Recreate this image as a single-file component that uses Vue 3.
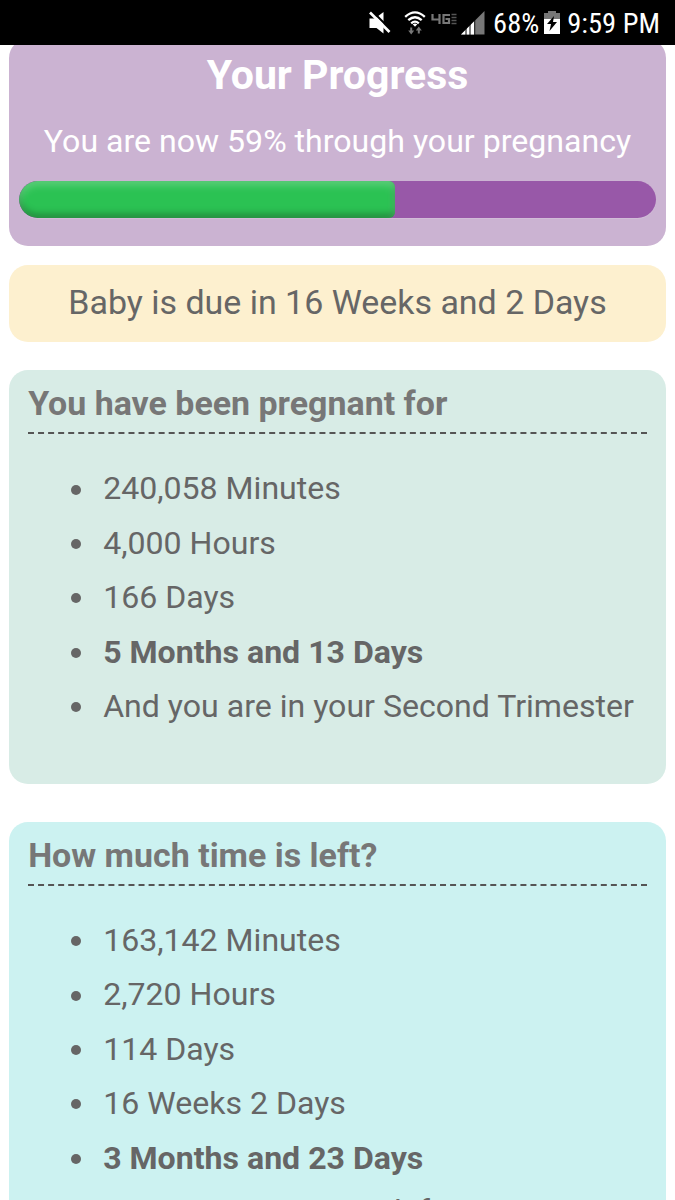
<script setup>
const elapsed = [
  { text: '240,058 Minutes' },
  { text: '4,000 Hours' },
  { text: '166 Days' },
  { text: '5 Months and 13 Days', strong: true },
  { text: 'And you are in your Second Trimester' },
]
const remaining = [
  { text: '163,142 Minutes' },
  { text: '2,720 Hours' },
  { text: '114 Days' },
  { text: '16 Weeks 2 Days' },
  { text: '3 Months and 23 Days', strong: true },
  { text: 'You are 1 semester left' },
]
const percent = 59
</script>

<template>
  <div class="screen">
    <header class="status">
      <svg class="mute" viewBox="0 0 22 24" width="22" height="24">
        <path d="M0.500 7.500h5.500L14.500 1v21.500L7.500 17h-7z" fill="#fff" />
        <path d="M2.500-.500l19.500 19.500" stroke="#000" stroke-width="2.200" />
        <path d="M1 1.500l19.500 19.500" stroke="#fff" stroke-width="2.600" />
      </svg>
      <svg class="wifi" viewBox="0 0 22 24" width="22" height="24">
        <g fill="none" stroke="#fff" stroke-width="2.3">
          <path d="M1.200 5.800Q11-3 20.800 5.800" />
          <path d="M4.300 9.200Q11 3.200 17.700 9.200" />
          <path d="M7.200 12.300Q11 8.900 14.800 12.300" />
        </g>
        <path d="M8.700 13.200Q11 11.600 13.300 13.200L11 15.700z" fill="#fff" />
        <path d="M7.200 16.500v4M14.800 18.500v4" stroke="#777" stroke-width="2" />
        <path d="M4.200 19.500h6l-3 4zM11.800 19.500h6l-3-4z" fill="#777" />
      </svg>
      <svg class="lte" viewBox="0 0 26 12" width="26" height="12">
        <path d="M1.500 1v5.500h8M8.500 1v10M19 2h-6.500v8H18V6h-3.500" fill="none" stroke="#777" stroke-width="2.200" />
        <path d="M20.500 1.500h5M20.500 4.500h5M20.500 7.500h5M20.500 10.500h5" fill="none" stroke="#555" stroke-width="1.300" />
      </svg>
      <svg class="signal" viewBox="0 0 24 24" width="24" height="24">
        <path d="M23.500 0v23.500H0z" fill="#777" />
        <path d="M14 9.500v14H0z" fill="#fff" />
        <path d="M5 17v7M9 13v11M13.700 9v15" stroke="#000" stroke-width="1" />
      </svg>
      <span class="battery-text">68%</span>
      <svg class="battery" viewBox="0 0 16 23" width="16" height="23">
        <path d="M4 0h8v2h4v6H0V2h4z" fill="#777" />
        <path d="M0 8h16v15H0z" fill="#fff" />
        <path d="M10 5l-7 8h4l-1.500 7L13 11H9z" fill="#000" />
      </svg>
      <span class="clock">9:59 PM</span>
    </header>

    <main class="content">
      <section class="card progress">
        <h1>Your Progress</h1>
        <p>You are now {{ percent }}% through your pregnancy</p>
        <div class="track"><div class="fill" :style="{ width: percent + '%' }"></div></div>
      </section>

      <section class="card due">Baby is due in 16 Weeks and 2 Days</section>

      <section class="card elapsed">
        <h2>You have been pregnant for</h2>
        <ul>
          <li v-for="item in elapsed" :key="item.text" :class="{ strong: item.strong }">{{ item.text }}</li>
        </ul>
      </section>

      <section class="card remaining">
        <h2>How much time is left?</h2>
        <ul>
          <li v-for="item in remaining" :key="item.text" :class="{ strong: item.strong }">{{ item.text }}</li>
        </ul>
      </section>
    </main>
  </div>
</template>

<style>
body {
  margin: 0;
  overflow: hidden;
}
</style>

<style scoped>
.screen {
  width: 675px;
  height: 1200px;
  display: flex;
  flex-direction: column;
  overflow: hidden;
  background: #fff;
  font-family: Roboto, sans-serif;
  color: #666;
}
.status {
  flex: none;
  height: 45px;
  box-sizing: border-box;
  padding-right: 15px;
  display: flex;
  align-items: center;
  justify-content: flex-end;
  background: #000;
  color: #fff;
}
.mute { margin-right: 13px; }
.wifi { margin-right: 5px; }
.lte { margin-right: 4px; margin-bottom: 7px; }
.signal { margin-right: 8px; }
.battery { margin: 0 7px 0 5px; }
.battery-text,
.clock {
  font-family: "Roboto Condensed", Roboto, sans-serif;
  font-stretch: condensed;
  font-size: 28.500px;
  line-height: 45px;
  padding-top: 1px;
  white-space: nowrap;
}
.content {
  flex: 1;
  min-height: 0;
  overflow: hidden;
  padding: 0 9.400px;
}
.card {
  box-sizing: border-box;
  border-radius: 19px;
  white-space: nowrap;
}
.progress {
  height: 207px;
  margin-top: -6px;
  padding: 10px 9.400px 0;
  background: #cbb3d2;
  color: #fff;
  text-align: center;
}
h1 {
  margin: 0;
  font-size: 41px;
  line-height: 52px;
}
.progress p {
  margin: 17px 0 17px;
  font-size: 32.100px;
  line-height: 46px;
}
.track {
  height: 37px;
  border-radius: 19px;
  overflow: hidden;
  background: #9858a8;
  box-shadow: 0 1px 1px rgba(255, 255, 255, 0.15);
}
.fill {
  height: 100%;
  border-radius: 19px 6px 6px 19px;
  background: #2bc253;
  box-shadow: inset 0 4px 9px rgba(255, 255, 255, 0.26), inset 0 -4px 7px rgba(0, 0, 0, 0.3);
}
.due {
  height: 77px;
  margin-top: 19px;
  background: #fdf0cf;
  font-size: 33.950px;
  line-height: 76px;
  text-align: center;
}
.elapsed,
.remaining {
  padding: 9px 18.750px 0;
}
.elapsed {
  height: 414px;
  margin-top: 28.400px;
  background: #d8ece6;
}
.remaining {
  height: 480px;
  margin-top: 37.600px;
  background: #ccf2f1;
}
h2 {
  margin: 0;
  height: 53px;
  border-bottom: 2px dashed #555;
  font-size: 33.950px;
  line-height: 49px;
  color: #777;
}
ul {
  margin: 27px 0 0;
  padding-left: 43px;
  font-size: 32.100px;
  line-height: 54.400px;
  list-style: none;
}
li {
  display: flex;
  align-items: center;
}
li::before {
  content: "";
  width: 10px;
  height: 10px;
  margin: 2px 22px 0 0;
  border-radius: 50%;
  background: #666;
}
.strong { font-weight: 700; }
.remaining li:last-child {
  margin-top: -1px;
  word-spacing: 2px;
}
</style>
